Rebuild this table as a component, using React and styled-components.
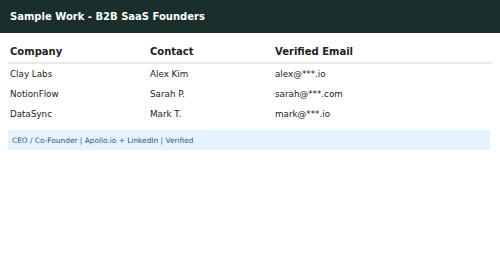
import styled, { createGlobalStyle } from "styled-components";

const GlobalStyle = createGlobalStyle`
  body {
    margin: 0;
    background: #ffffff;
    font-family: "DejaVu Sans", Verdana, sans-serif;
  }
`;

const rows = [
  { company: "Clay Labs", contact: "Alex Kim", email: "alex@***.io" },
  { company: "NotionFlow", contact: "Sarah P.", email: "sarah@***.com" },
  { company: "DataSync", contact: "Mark T.", email: "mark@***.io" },
];

export default function App() {
  return (
    <Page>
      <GlobalStyle />
      <TopBar>Sample Work - B2B SaaS Founders</TopBar>
      <Content>
        <Table>
          <thead>
            <tr>
              <Th $w="136px">Company</Th>
              <Th $w="121px">Contact</Th>
              <Th>Verified Email</Th>
            </tr>
          </thead>
          <tbody>
            {rows.map((r) => (
              <tr key={r.company}>
                <Td>{r.company}</Td>
                <Td>{r.contact}</Td>
                <Td>{r.email}</Td>
              </tr>
            ))}
          </tbody>
        </Table>
        <Note>CEO / Co-Founder | Apollo.io + LinkedIn | Verified</Note>
      </Content>
    </Page>
  );
}

const Page = styled.div`
  width: 500px;
  height: 275px;
  background: #ffffff;
`;

const TopBar = styled.div`
  height: 33px;
  box-sizing: border-box;
  padding: 0 10px;
  display: flex;
  align-items: center;
  background: #1a2e2b;
  color: #ffffff;
  font-weight: bold;
  font-size: 10px;
`;

const Content = styled.div`
  padding: 8px 8px 0;
`;

const Table = styled.table`
  width: 100%;
  border-collapse: collapse;
  color: #222;
`;

const Th = styled.th`
  width: ${(p) => p.$w || "auto"};
  text-align: left;
  font-size: 10px;
  font-weight: bold;
  padding: 5px 2px 5px;
  border-bottom: 2px solid #e8e8e8;
`;

const Td = styled.td`
  font-size: 8.75px;
  padding: 5px 2px;
  height: 10px;
`;

const Note = styled.div`
  margin-top: 6px;
  margin-right: 2px;
  height: 20px;
  box-sizing: border-box;
  padding: 0 4px;
  display: flex;
  align-items: center;
  background: #e6f2fd;
  color: #2b5a86;
  font-size: 7.4px;
`;
